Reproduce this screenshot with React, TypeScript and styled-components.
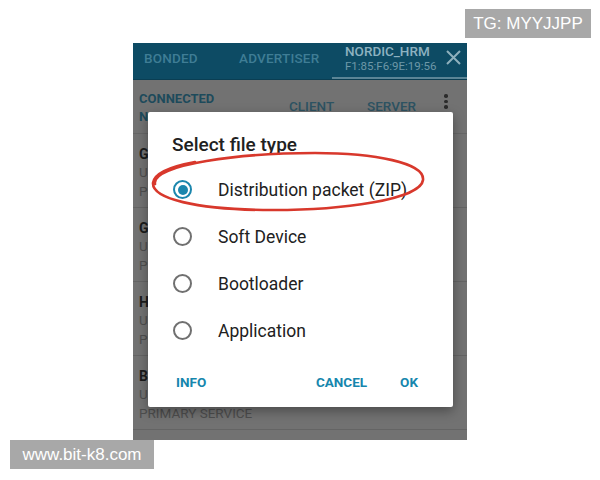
import styled, { createGlobalStyle } from "styled-components";

const GlobalStyle = createGlobalStyle`
  html, body {
    margin: 0;
    padding: 0;
    background: #ffffff;
  }
  * {
    box-sizing: border-box;
  }
`;

const services = [
  { name: "Generic Access", uuid: "UUID: 0x1800" },
  { name: "Generic Attribute", uuid: "UUID: 0x1801" },
  { name: "Heart Rate", uuid: "UUID: 0x180D" },
  { name: "Battery Service", uuid: "UUID: 0x180F" },
];

const fileTypes = ["Distribution packet (ZIP)", "Soft Device", "Bootloader", "Application"];

const App = () => {
  return (
    <Page>
      <GlobalStyle />
      <Phone>
        <Header>
          <Tab $width={95}>BONDED</Tab>
          <Tab $width={104}>ADVERTISER</Tab>
          <ActiveTab>
            <DeviceInfo>
              <DeviceName>NORDIC_HRM</DeviceName>
              <DeviceAddress>F1:85:F6:9E:19:56</DeviceAddress>
            </DeviceInfo>
            <CloseIcon width="15" height="15" viewBox="0 0 15 15">
              <path d="M1 1 L14 14 M14 1 L1 14" stroke="#8fb0bd" strokeWidth="2" fill="none" />
            </CloseIcon>
          </ActiveTab>
        </Header>

        <SubHeader>
          <Status>
            <div>CONNECTED</div>
            <div>NOT BONDED</div>
          </Status>
          <SideTab>CLIENT</SideTab>
          <SideTab>SERVER</SideTab>
          <MoreDots>
            <span />
            <span />
            <span />
          </MoreDots>
        </SubHeader>

        {services.map((s) => (
          <ServiceRow key={s.name}>
            <ServiceName>{s.name}</ServiceName>
            <ServiceMeta>{s.uuid}</ServiceMeta>
            <ServiceMeta>PRIMARY SERVICE</ServiceMeta>
          </ServiceRow>
        ))}

        <Dialog>
          <DialogTitle>Select file type</DialogTitle>
          {fileTypes.map((t, i) => (
            <Option key={t}>
              <Radio $checked={i === 0} />
              <OptionLabel>{t}</OptionLabel>
            </Option>
          ))}
          <Actions>
            <ActionButton>INFO</ActionButton>
            <Spacer />
            <ActionButton>CANCEL</ActionButton>
            <ActionButton>OK</ActionButton>
          </Actions>
        </Dialog>

        {/* hand-drawn red ring round the first option */}
        <Marker viewBox="0 0 334 397" width="334" height="397">
          <path
            d="M 22 141 C 18 121, 110 110, 182 110 C 242 110, 292 120, 290 137 C 288 156, 210 168, 130 167 C 64 166, 19 156, 20 140 C 21 130, 40 123, 62 119"
            stroke="#d8382c"
            strokeWidth="2.6"
            fill="none"
            strokeLinecap="round"
          />
        </Marker>
      </Phone>

      <Watermark $top={9} $left={465} $width={126}>
        TG: MYYJJPP
      </Watermark>
      <Watermark $top={440} $left={10} $width={144}>
        www.bit-k8.com
      </Watermark>
    </Page>
  );
};

const Page = styled.div`
  position: relative;
  width: 600px;
  height: 480px;
  padding: 43px 0 0 133px;
  background: #ffffff;
  font-family: Roboto, "Noto Sans", sans-serif;
  overflow: hidden;
`;

const Phone = styled.div`
  position: relative;
  width: 334px;
  height: 397px;
  background: #727272;
  overflow: hidden;
`;

const Header = styled.div`
  display: flex;
  height: 37px;
  background: #0d4b64;
  border-bottom: 1px solid #0a3e53;
`;

const Tab = styled.div<{ $width: number }>`
  width: ${(p) => p.$width}px;
  padding: 7px 0 0 11px;
  font-size: 13.5px;
  font-weight: 500;
  color: #3f7d95;
  letter-spacing: 0.2px;
`;

const ActiveTab = styled.div`
  flex: 1;
  display: flex;
  justify-content: space-between;
  padding: 1px 6px 0 13px;
  border-bottom: 2px solid #5a8596;
`;

const DeviceInfo = styled.div`
  display: flex;
  flex-direction: column;
`;

const DeviceName = styled.div`
  font-size: 13.5px;
  font-weight: 500;
  line-height: 15px;
  color: #8db2c0;
`;

const DeviceAddress = styled.div`
  font-size: 11.5px;
  line-height: 15px;
  color: #6e98a8;
`;

const CloseIcon = styled.svg`
  margin-top: 6px;
`;

const SubHeader = styled.div`
  display: flex;
  align-items: flex-start;
  height: 54px;
  padding: 10px 0 0 6px;
  border-bottom: 1px solid #666666;
`;

const Status = styled.div`
  width: 150px;
  font-size: 13px;
  font-weight: 700;
  line-height: 18px;
  color: #1d4a5b;
`;

const SideTab = styled.div`
  width: 78px;
  padding-top: 8px;
  font-size: 13.5px;
  font-weight: 500;
  color: #2d5362;
`;

const MoreDots = styled.div`
  display: flex;
  flex-direction: column;
  gap: 2px;
  margin: 4px 0 0 -1px;

  span {
    width: 3.5px;
    height: 3.5px;
    border-radius: 50%;
    background: #2b2b2b;
  }
`;

const ServiceRow = styled.div`
  height: 74px;
  padding: 11px 0 0 6px;
  border-bottom: 1px solid #646464;
`;

const ServiceName = styled.div`
  font-size: 14px;
  font-weight: 700;
  line-height: 18px;
  color: #1b1b1b;
`;

const ServiceMeta = styled.div`
  font-size: 13.5px;
  line-height: 18.5px;
  color: #4e4e4e;
`;

const Dialog = styled.div`
  position: absolute;
  left: 15px;
  top: 69px;
  width: 305px;
  height: 295px;
  padding-top: 20px;
  background: #ffffff;
  border-radius: 2px;
  box-shadow: 0 4px 12px rgba(0, 0, 0, 0.35);
`;

const DialogTitle = styled.div`
  padding-left: 24px;
  margin-bottom: 9px;
  font-size: 19px;
  font-weight: 500;
  line-height: 25px;
  color: #212121;
`;

const Option = styled.div`
  display: flex;
  align-items: center;
  gap: 26px;
  height: 47px;
  padding-left: 25px;
`;

const Radio = styled.span<{ $checked?: boolean }>`
  position: relative;
  width: 19px;
  height: 19px;
  border-radius: 50%;
  border: 2px solid ${(p) => (p.$checked ? "#1b86ad" : "#707070")};

  &::after {
    content: "";
    display: ${(p) => (p.$checked ? "block" : "none")};
    position: absolute;
    left: 2.5px;
    top: 2.5px;
    width: 10px;
    height: 10px;
    border-radius: 50%;
    background: #1b86ad;
  }
`;

const OptionLabel = styled.span`
  font-size: 17.5px;
  color: #212121;
`;

const Actions = styled.div`
  display: flex;
  align-items: center;
  gap: 33px;
  height: 36px;
  margin-top: 10px;
  padding: 0 35px 0 28px;
`;

const ActionButton = styled.span`
  font-size: 13.5px;
  font-weight: 700;
  color: #1686ad;
`;

const Spacer = styled.div`
  flex: 1;
`;

const Marker = styled.svg`
  position: absolute;
  left: 0;
  top: 0;
  pointer-events: none;
`;

const Watermark = styled.div<{ $top: number; $left: number; $width: number }>`
  position: absolute;
  top: ${(p) => p.$top}px;
  left: ${(p) => p.$left}px;
  width: ${(p) => p.$width}px;
  height: 29px;
  display: flex;
  align-items: center;
  justify-content: center;
  background: #a8a8a8;
  color: #ffffff;
  font-family: "Liberation Sans", Arial, sans-serif;
  font-size: 17px;
`;

export default App;
